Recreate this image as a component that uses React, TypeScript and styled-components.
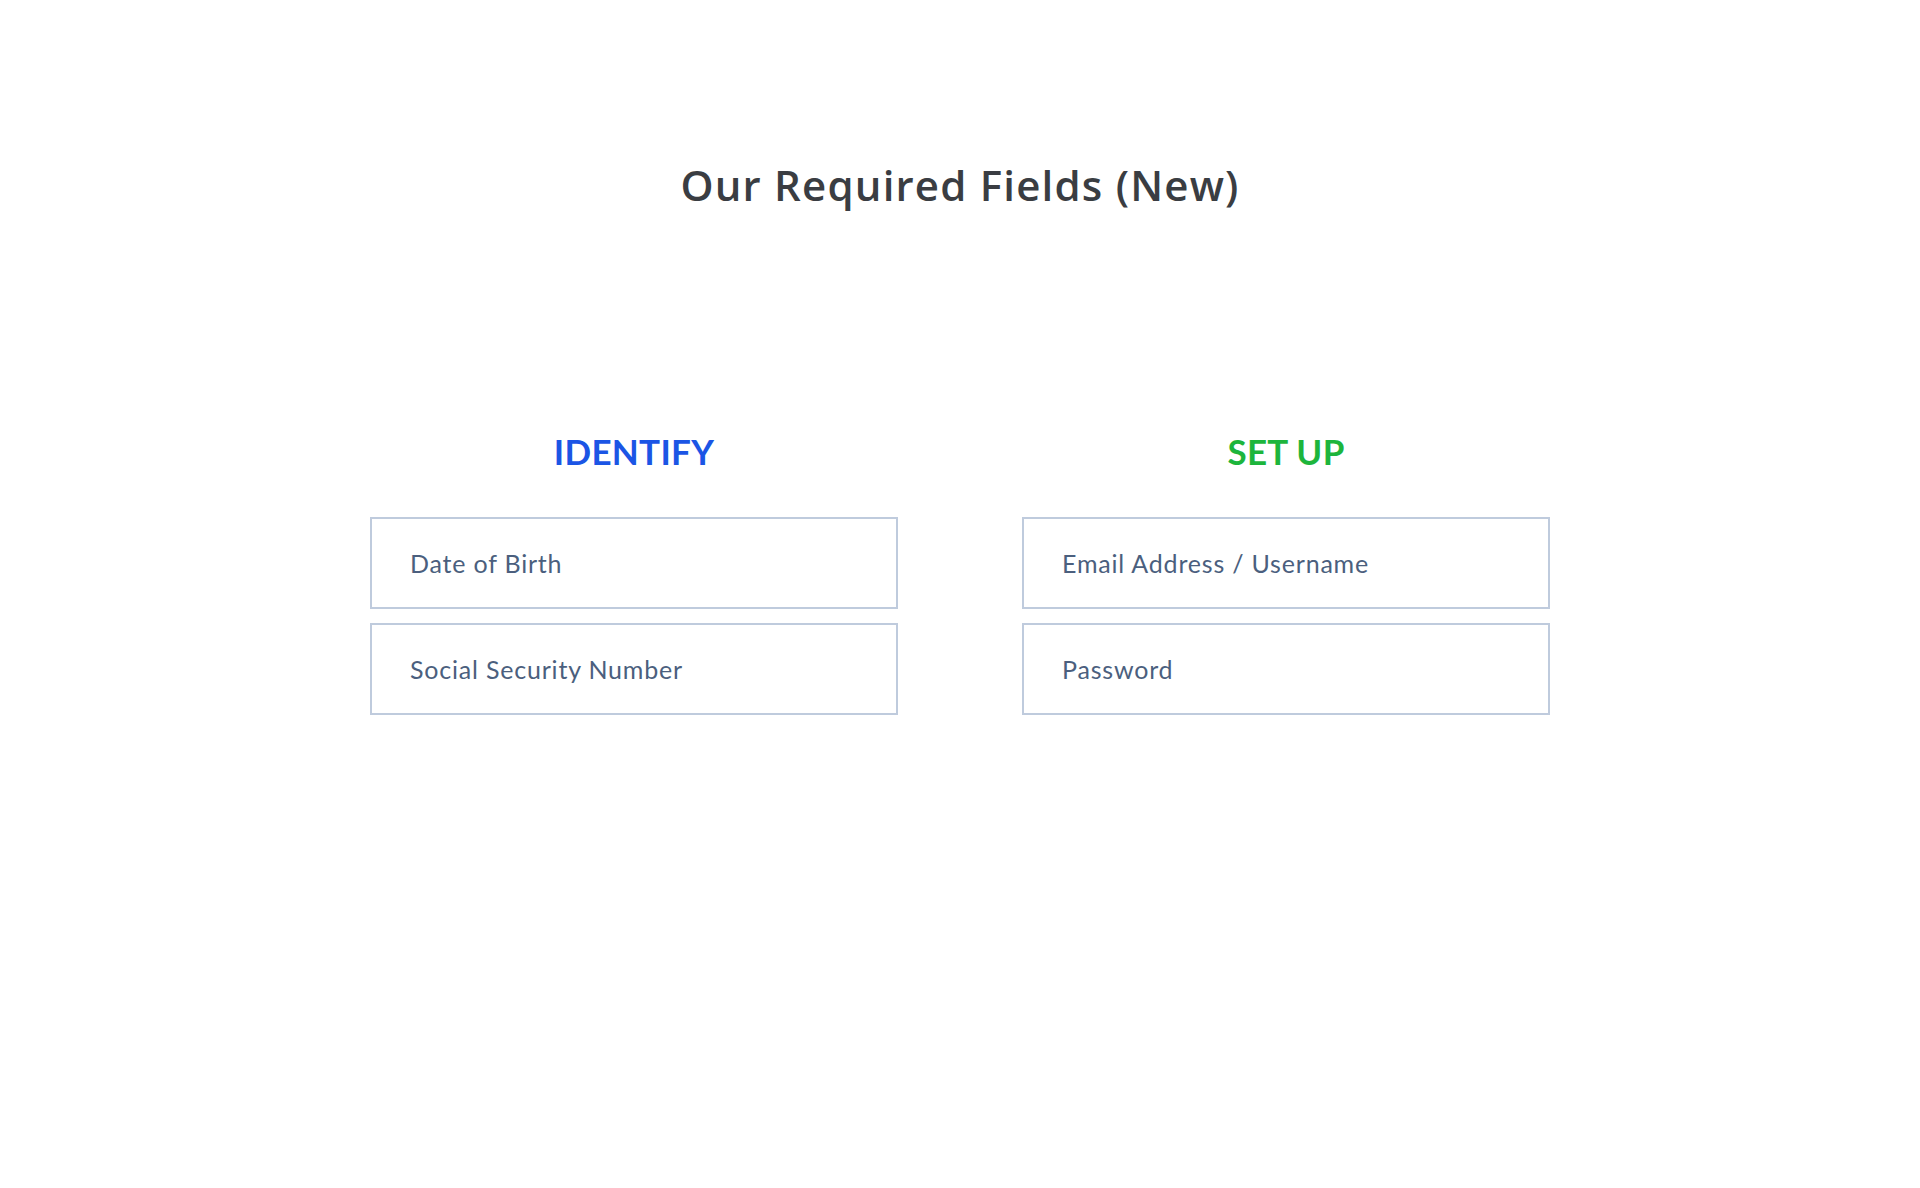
import React from "react";
import styled, { createGlobalStyle } from "styled-components";

const GlobalStyle = createGlobalStyle`
  html, body {
    margin: 0;
    padding: 0;
    background: #ffffff;
  }
  body {
    font-family: Lato, "Open Sans", "Liberation Sans", sans-serif;
    -webkit-font-smoothing: antialiased;
  }
`;

const Page = styled.main`
  min-height: 1188px;
  display: flex;
  flex-direction: column;
  align-items: center;
  padding-top: 160px;
  box-sizing: border-box;
`;

const Title = styled.h1`
  margin: 0;
  font-family: "Open Sans", Lato, "Liberation Sans", sans-serif;
  font-size: 42px;
  line-height: 50px;
  font-weight: 600;
  color: #3a3d42;
  letter-spacing: 1.2px;
`;

const Columns = styled.div`
  display: grid;
  grid-template-columns: 528px 528px;
  column-gap: 124px;
  margin-top: 220px;
`;

const Column = styled.section`
  display: flex;
  flex-direction: column;
`;

interface HeadingProps {
  $color: string;
}
const Heading = styled.h2<HeadingProps>`
  margin: 0 0 45px;
  text-align: center;
  font-size: 35px;
  line-height: 42px;
  font-weight: 700;
  color: ${({ $color }) => $color};
  letter-spacing: 0.3px;
`;

const Fields = styled.div`
  display: flex;
  flex-direction: column;
  gap: 14px;
`;

const Field = styled.input`
  width: 100%;
  height: 92px;
  box-sizing: border-box;
  border: 2px solid #bfcbdd;
  border-radius: 0;
  padding: 0 38px;
  font-family: Lato, "Open Sans", "Liberation Sans", sans-serif;
  font-size: 25px;
  line-height: 30px;
  letter-spacing: 0.8px;
  color: #4b5f7e;
  background: #ffffff;
  outline: none;
  &::placeholder {
    color: #4b5f7e;
    opacity: 1;
  }
`;

type Group = {
  title: string;
  color: string;
  fields: string[];
};

const groups: Group[] = [
  {
    title: "IDENTIFY",
    color: "#1b55e5",
    fields: ["Date of Birth", "Social Security Number"],
  },
  {
    title: "SET UP",
    color: "#1db53c",
    fields: ["Email Address / Username", "Password"],
  },
];

const App: React.FC = () => {
  return (
    <>
      <GlobalStyle />
      <Page>
        <Title>Our Required Fields (New)</Title>
        <Columns>
          {groups.map((group) => (
            <Column key={group.title}>
              <Heading $color={group.color}>{group.title}</Heading>
              <Fields>
                {group.fields.map((field) => (
                  <Field
                    key={field}
                    type={field === "Password" ? "password" : "text"}
                    placeholder={field}
                  />
                ))}
              </Fields>
            </Column>
          ))}
        </Columns>
      </Page>
    </>
  );
};

export default App;
